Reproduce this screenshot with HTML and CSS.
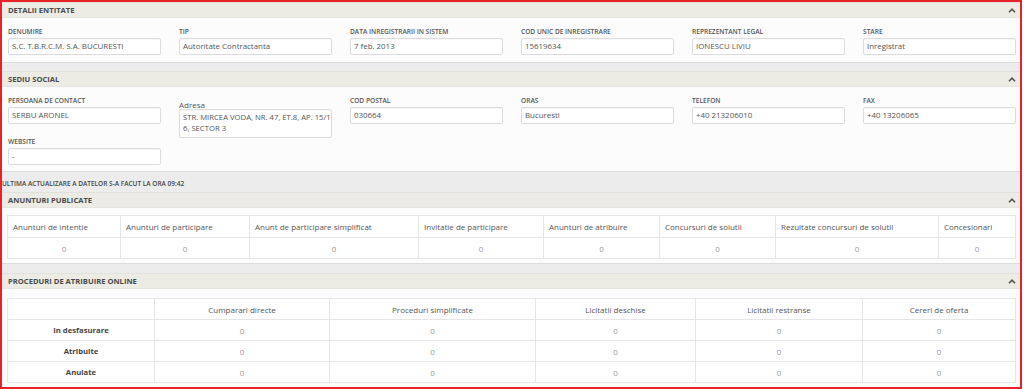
FILE: index.html
```html
<!DOCTYPE html>
<html lang="ro">
<head>
    <meta charset="UTF-8">
    <title>Detalii entitate</title>
    <link rel="stylesheet" href="styles.css">
</head>
<body>

<div class="frame">

    <div class="panel">
        <div class="panel-head">
            <span>DETALII ENTITATE</span>
            <svg class="chevron" width="8" height="5" viewBox="0 0 8 5"><polyline points="1,4.2 4,1.2 7,4.2" fill="none" stroke="#555" stroke-width="1.6"/></svg>
        </div>
        <div class="panel-body fields">
            <div class="field"><label>DENUMIRE</label><div class="input">S.C. T.B.R.C.M. S.A. BUCURESTI</div></div>
            <div class="field"><label>TIP</label><div class="input">Autoritate Contractanta</div></div>
            <div class="field"><label>DATA INREGISTRARII IN SISTEM</label><div class="input">7 feb. 2013</div></div>
            <div class="field"><label>COD UNIC DE INREGISTRARE</label><div class="input">15619634</div></div>
            <div class="field"><label>REPREZENTANT LEGAL</label><div class="input">IONESCU LIVIU</div></div>
            <div class="field"><label>STARE</label><div class="input">Inregistrat</div></div>
        </div>
    </div>

    <div class="band"></div>

    <div class="panel">
        <div class="panel-head">
            <span>SEDIU SOCIAL</span>
            <svg class="chevron" width="8" height="5" viewBox="0 0 8 5"><polyline points="1,4.2 4,1.2 7,4.2" fill="none" stroke="#555" stroke-width="1.6"/></svg>
        </div>
        <div class="panel-body fields tall">
            <div class="field"><label>PERSOANA DE CONTACT</label><div class="input">SERBU ARONEL</div></div>
            <div class="field address"><label>Adresa</label><div class="input area">STR. MIRCEA VODA, NR. 47, ET.8, AP. 15/16, SECTOR 3</div></div>
            <div class="field"><label>COD POSTAL</label><div class="input">030664</div></div>
            <div class="field"><label>ORAS</label><div class="input">Bucuresti</div></div>
            <div class="field"><label>TELEFON</label><div class="input">+40 213206010</div></div>
            <div class="field"><label>FAX</label><div class="input">+40 13206065</div></div>
            <div class="field"><label>WEBSITE</label><div class="input">-</div></div>
        </div>
    </div>

    <div class="band update">ULTIMA ACTUALIZARE A DATELOR S-A FACUT LA ORA 09:42</div>

    <div class="panel">
        <div class="panel-head">
            <span>ANUNTURI PUBLICATE</span>
            <svg class="chevron" width="8" height="5" viewBox="0 0 8 5"><polyline points="1,4.2 4,1.2 7,4.2" fill="none" stroke="#555" stroke-width="1.6"/></svg>
        </div>
        <div class="panel-body table-wrap">
            <table class="stats notices">
                <colgroup>
                    <col class="n1"><col class="n2"><col class="n3"><col class="n4">
                    <col class="n5"><col class="n6"><col class="n7"><col class="n8">
                </colgroup>
                <tr>
                    <th>Anunturi de intentie</th>
                    <th>Anunturi de participare</th>
                    <th>Anunt de participare simplificat</th>
                    <th>Invitatie de participare</th>
                    <th>Anunturi de atribuire</th>
                    <th>Concursuri de solutii</th>
                    <th>Rezultate concursuri de solutii</th>
                    <th>Concesionari</th>
                </tr>
                <tr>
                    <td>0</td><td>0</td><td>0</td><td>0</td><td>0</td><td>0</td><td>0</td><td>0</td>
                </tr>
            </table>
        </div>
    </div>

    <div class="band short"></div>

    <div class="panel">
        <div class="panel-head">
            <span>PROCEDURI DE ATRIBUIRE ONLINE</span>
            <svg class="chevron" width="8" height="5" viewBox="0 0 8 5"><polyline points="1,4.2 4,1.2 7,4.2" fill="none" stroke="#555" stroke-width="1.6"/></svg>
        </div>
        <div class="panel-body table-wrap last">
            <table class="stats procedures">
                <colgroup>
                    <col class="p1"><col class="p2"><col class="p3"><col class="p4"><col class="p5"><col class="p6">
                </colgroup>
                <tr>
                    <th></th>
                    <th>Cumparari directe</th>
                    <th>Proceduri simplificate</th>
                    <th>Licitatii deschise</th>
                    <th>Licitatii restranse</th>
                    <th>Cereri de oferta</th>
                </tr>
                <tr>
                    <td class="row-name">In desfasurare</td><td>0</td><td>0</td><td>0</td><td>0</td><td>0</td>
                </tr>
                <tr>
                    <td class="row-name">Atribuite</td><td>0</td><td>0</td><td>0</td><td>0</td><td>0</td>
                </tr>
                <tr>
                    <td class="row-name">Anulate</td><td>0</td><td>0</td><td>0</td><td>0</td><td>0</td>
                </tr>
            </table>
        </div>
    </div>

</div>

</body>
</html>
```

FILE: styles.css
```css
body {
    margin: 0;
    background-color: white;
    font-family: "Open Sans", "Liberation Sans", sans-serif;
    color: #555;
}

.frame {
    width: 1022px;
    height: 389px;
    box-sizing: border-box;
    border: 2px solid #e8212b;
    background-color: #ececec;
    overflow: hidden;
}

.panel-head {
    height: 14px;
    display: flex;
    align-items: center;
    justify-content: space-between;
    padding: 0 4px 0 6px;
    background-color: #ecebe4;
    border-top: 1px solid #e2e2dc;
    font-size: 7.6px;
    font-weight: 700;
    color: #4a4a4a;
}

.chevron {
    display: block;
}

.panel-body {
    background-color: #fcfcfc;
    border-top: 1px solid #e6e6e0;
    border-bottom: 1px solid #dcdcdc;
}

.fields {
    display: grid;
    grid-template-columns: repeat(6, 153px);
    column-gap: 18px;
    align-items: start;
    padding: 10px 4px 7px 6px;
}

.fields.tall {
    padding-bottom: 6px;
}

.field label {
    display: block;
    height: 10px;
    font-size: 6.6px;
    font-weight: 600;
    color: #555;
    line-height: 8px;
}

.input {
    height: 17px;
    box-sizing: border-box;
    border: 1px solid #dcdcdc;
    border-radius: 2px;
    background-color: white;
    box-shadow: inset 0 1px 1px rgba(0, 0, 0, 0.03);
    padding: 0 3px;
    font-size: 7.9px;
    line-height: 15px;
    color: #555;
    white-space: nowrap;
    overflow: hidden;
}

.field.address label {
    margin-top: 3px;
    height: 9px;
    font-size: 8px;
    font-weight: 400;
    line-height: 9px;
}

.input.area {
    height: 29px;
    padding: 2px 0 0 3px;
    font-size: 7.7px;
    line-height: 11px;
    white-space: normal;
    word-break: break-all;
}

.band {
    height: 8px;
    background-color: #ececec;
}

.band.update {
    height: 20px;
    box-sizing: border-box;
    padding-top: 8px;
    font-size: 6.5px;
    font-weight: 600;
    color: #444;
    line-height: 8px;
}

.band.short {
    height: 9px;
}

.table-wrap {
    padding: 7px 5px 4px 5px;
}

.table-wrap.last {
    padding-top: 9px;
    padding-bottom: 5px;
}

.stats {
    width: 1008px;
    table-layout: fixed;
    border-collapse: collapse;
    background-color: white;
    font-size: 8px;
    color: #555;
}

.stats th,
.stats td {
    border: 1px solid #e6e6e6;
    padding: 0;
    font-weight: 400;
    text-align: center;
    white-space: nowrap;
    overflow: hidden;
}

.stats th {
    height: 21px;
}

.stats td {
    height: 20px;
    color: #999;
}

.notices th {
    text-align: left;
    padding: 0 5px;
}

.procedures th,
.procedures td {
    height: 20px;
}

.procedures .row-name {
    font-size: 7.7px;
    font-weight: 700;
    color: #444;
}

.n1 { width: 113px; }
.n2 { width: 129px; }
.n3 { width: 169px; }
.n4 { width: 125px; }
.n5 { width: 116px; }
.n6 { width: 116px; }
.n7 { width: 163px; }
.n8 { width: 77px; }

.p1 { width: 147px; }
.p2 { width: 175px; }
.p3 { width: 206px; }
.p4 { width: 160px; }
.p5 { width: 167px; }
.p6 { width: 153px; }
```
